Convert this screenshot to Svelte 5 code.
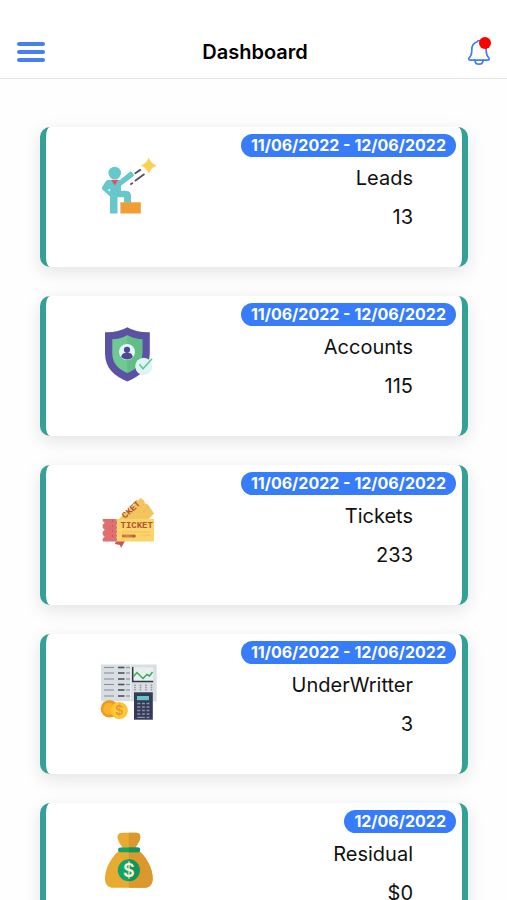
<script>
  const cards = [
    { id: 'leads', title: 'Leads', value: '13', period: '11/06/2022 - 12/06/2022', box: '11 8 56 56' },
    { id: 'accounts', title: 'Accounts', value: '115', period: '11/06/2022 - 12/06/2022', box: '11 12 56 56' },
    { id: 'tickets', title: 'Tickets', value: '233', period: '11/06/2022 - 12/06/2022', box: '11 11 56 56' },
    { id: 'underwriter', title: 'UnderWritter', value: '3', period: '11/06/2022 - 12/06/2022', box: '11 10 56 56' },
    { id: 'residual', title: 'Residual', value: '$0', period: '12/06/2022', box: '11 14 56 56' }
  ];
  const rows = [12.5, 18, 24, 29.5, 35, 41];
  const keys = [48.5, 52, 55.5, 59];
</script>

<div class="screen">
  <header>
    <button class="menu" aria-label="Open menu">
      <span></span><span></span><span></span>
    </button>
    <h1>Dashboard</h1>
    <button class="bell" aria-label="Notifications">
      <svg viewBox="0 0 28 30" width="28" height="30" fill="none" stroke="#3f7df0" stroke-width="1.7" stroke-linejoin="round" stroke-linecap="round">
        <path d="M14 3.500c-.9 0-1.500.4-1.700 1.200C8.600 5.700 6.800 8.600 6.800 12.700c0 5-1 6.600-2.500 8-.9.9-.5 2.400.7 2.400h18c1.200 0 1.600-1.500.7-2.400-1.500-1.400-2.500-3-2.500-8 0-4.100-1.800-7-5.500-8-.2-.8-.8-1.200-1.700-1.200Z" />
        <path d="M10 23.200c0 2.500 1.700 4 4 4s4-1.500 4-4" />
      </svg>
      <i class="dot"></i>
    </button>
  </header>

  <main>
    {#each cards as card (card.id)}
      <article>
        <span class="period">{card.period}</span>
        <div class="content">
          <svg class="picture" viewBox={card.box} aria-hidden="true">
            {#if card.id === 'leads'}
              <circle cx="24.700" cy="23" r="6.300" fill="#66c8cb" />
              <path d="M18 30h12l10-8.300q1-.7 1.800.2l2 2.500q.8 1-.3 1.900L31 35.700v5h5q5 .3 5 5.500v6.500h-7v-5.500h-6.500v16.300h-7.500V46.500l-7.600-7q-1-1-.2-2.500l2.800-4.500Q16 30 18 30Z" fill="#66c8cb" />
              <path d="m19.500 38.500 1.200 1.700-1.200 1.300-1.800-1.200Z" fill="#d8f1f2" />
              <path d="M21.500 29.800h6.600l-1 2-2.200 3.700-2.700-3.700Z" fill="#e25265" />
              <path d="M30.400 52.300h20.400v11.200H30.400Z" fill="#f09d35" />
              <path d="m45.300 23.200 5-3.300M45.500 30.600l8.300-6.200M41 34l1.300-.8" stroke="#555563" stroke-width="1.900" stroke-linecap="round" />
              <path d="M58.700 8.300q2 5.500 7.300 7.300-5.300 2-7.300 7.400-2-5.400-7.300-7.400 5.300-1.800 7.300-7.300Z" fill="#fbd04d" stroke="#fbd04d" stroke-width=".6" />
            {:else if card.id === 'accounts'}
              <path d="M37.300 12.200Q46 17.500 59.800 17.200V38c0 15-9 23-22.500 28.500C24 61 15 53 15 38V17.200q13.500.3 22.300-5Z" fill="#5b52a5" />
              <path d="M37.300 20.300q7 4 15 4V38c0 10.500-6.300 16-15 20-8.800-4-15-9.500-15-20V24.300q8 0 15-4Z" fill="#6fca91" />
              <path d="M37.300 20.300q7 4 15 4V38c0 10.500-6.300 16-15 20Z" fill="#62bd86" />
              <circle cx="37" cy="37" r="8" fill="#e6f6f8" />
              <circle cx="37" cy="34.800" r="3.100" fill="#4e4797" />
              <path d="M31.200 42.200q.4-4 3.800-4.200h4q3.400.2 3.800 4.200-5.300 4.500-11.600 0Z" fill="#4e4797" />
              <circle cx="53.800" cy="51.300" r="8.600" fill="#e1f3f7" />
              <path d="m49.500 49.200 3.500 4.500 9-10" fill="none" stroke="#5dcc91" stroke-width="1.600" />
            {:else if card.id === 'tickets'}
              <path d="M26 56h9l-4 7-1-3-5-1Z" fill="#cf5358" />
              <path d="M12.700 34H27v22.500H12.700v-3l2-1.700-2-2v-3l2-2-2-2v-3l2-2-2-1.800Z" fill="#e06f70" />
              <path d="M22.500 35v2m0 3v2m0 3v2m0 3v2" stroke="#c75b5f" stroke-width="1" />
              <path d="M29 34 50.500 13l3.500 2.500 1 3 3 1 6 9-6 6Z" fill="#f4c55e" />
              <path d="m49 24 5-5m-2 9 6-6" stroke="#e7b34f" stroke-width=".7" />
              <text x="35" y="34" transform="rotate(-43 35 34)" class="stub">CKET</text>
              <path d="M26 34h38v22.500H26l1.600-2-1.600-2 1.600-2-1.600-2 1.600-2-1.600-2 1.600-2-1.600-2 1.600-2Z" fill="#fbd46b" />
              <text x="30.500" y="43" class="ticket">TICKET</text>
              <path d="M32 47h28M50 50h11" stroke="#e4b85b" stroke-width=".6" />
              <path d="M32 51h12" stroke="#c96f42" stroke-width="2.800" />
              <path d="M35 51h5" stroke="#e8a357" stroke-width=".8" />
              <circle cx="44.300" cy="51" r="1.500" fill="#b75a38" />
            {:else if card.id === 'underwriter'}
              <path d="M11 9.500h55.700v36.800H11Z" fill="#d9dee2" />
              <path d="M40.700 9.500v36.800" stroke="#eef1f3" stroke-width="1" />
              {#each rows as y}
                <path d="M14 {y}h10" stroke="#8b929b" stroke-width="1.100" />
                <path d="M28 {y}h6.500" stroke="#4b5263" stroke-width="1.600" />
                <path d="M36 {y}h4" stroke="#9299a2" stroke-width="1.300" />
              {/each}
              <path d="M43.300 12.300h20V26h-20Z" fill="#e9eeee" />
              <path d="M42.700 12v14.500h20.500" fill="none" stroke="#34384d" stroke-width="1.500" />
              <path d="m43.500 21.500 3.500-4 6 6 4-4 2.500 1.500 3-4" fill="none" stroke="#39ad59" stroke-width="1.500" />
              <path d="M45 29.500v6m5.500-6v6m5.500-6v6m5.500-6v6" stroke="#9299a2" stroke-width="1.500" stroke-dasharray="1.500 .7" />
              <circle cx="19.500" cy="53.800" r="8.800" fill="#ec9a22" />
              <circle cx="19" cy="53.800" r="6" fill="#f7b32b" />
              <circle cx="29.300" cy="55.500" r="8.600" fill="#fdc22e" />
              <circle cx="29.300" cy="55.500" r="6.400" fill="#ffcb45" />
              <text x="29.300" y="60.200" class="coin">$</text>
              <path d="M44 37.300h18.800v27.400H44Z" fill="#343a58" />
              <path d="M47 41h12v4.200H47Z" fill="#65c5c5" />
              {#each keys as y}
                <path d="M47.300 {y}h3m1.600 0h3m1.600 0h3" stroke="#8d92a8" stroke-width="1.500" />
              {/each}
              <path d="M47.300 62.300h7.600m1.600 0h3" stroke="#8d92a8" stroke-width="1.200" />
            {:else}
              <path d="M32.500 28c-2-4-5-7-5-11 0-3 2-4.200 5-4.200h12.800c3.500 0 5 1.200 5 4.200 0 4-3 7-5 11C56 35 62.700 48 62.700 58.500c0 6-3 9.300-9 9.300H24c-6 0-9-3.300-9-9.300C15 48 22 35 32.500 28Z" fill="#e9aa31" />
              <path d="M38.800 12.800h6.500c3.500 0 5 1.200 5 4.200 0 4-3 7-5 11C56 35 62.700 48 62.700 58.500c0 6-3 9.300-9 9.300H38.800Z" fill="#db982c" />
              <rect x="28" y="27.500" width="22" height="4.700" rx="2.300" fill="#14a46b" />
              <path d="M38.800 27.500h9a2.300 2.300 0 0 1 0 4.700h-9Z" fill="#0e9560" />
              <circle cx="38.800" cy="50.300" r="11" fill="#14a46b" />
              <path d="M38.800 39.300a11 11 0 0 1 0 22Z" fill="#0e9560" />
              <text x="38.800" y="56.700" class="dollar">$</text>
            {/if}
          </svg>
          <div class="figures">
            <h2>{card.title}</h2>
            <p>{card.value}</p>
          </div>
        </div>
      </article>
    {/each}
  </main>
</div>

<style>
  :global(body) {
    margin: 0;
    background: #fefefe;
  }
  .screen {
    height: 100vh;
    display: flex;
    flex-direction: column;
    color: #111;
    font-family: Inter, "Liberation Sans", sans-serif;
  }
  header {
    flex: none;
    display: grid;
    grid-template-columns: 1fr auto 1fr;
    align-items: center;
    box-sizing: border-box;
    height: 79px;
    padding: 26px 14px 0 17px;
    border-bottom: 1px solid #e6e6e6;
    background: #fff;
  }
  h1, h2, p {
    margin: 0;
    font-size: 20px;
    line-height: 24px;
    font-weight: 400;
  }
  h1 {
    font-weight: 600;
    color: #000;
  }
  button {
    padding: 0;
    border: 0;
    background: none;
    cursor: pointer;
  }
  .menu {
    display: flex;
    flex-direction: column;
    gap: 4px;
    width: 28px;
  }
  .menu span {
    height: 4px;
    border-radius: 2px;
    background: #4480ee;
  }
  .bell {
    position: relative;
    justify-self: end;
    width: 28px;
    height: 30px;
  }
  .bell svg {
    display: block;
  }
  .dot {
    position: absolute;
    top: 0;
    right: 2px;
    width: 12px;
    height: 12px;
    border-radius: 50%;
    background: #fe0000;
  }
  main {
    flex: 1;
    min-height: 0;
    overflow-y: auto;
    scrollbar-width: none;
    display: flex;
    flex-direction: column;
    gap: 29px;
    padding: 48px 39px 48px 40px;
  }
  article {
    flex: none;
    display: flex;
    flex-direction: column;
    box-sizing: border-box;
    min-height: 140px;
    padding: 7px 6px 0;
    border: solid #33a196;
    border-width: 0 6px;
    border-radius: 10px;
    background: #fff;
    box-shadow: 0 5px 18px rgba(0, 0, 0, 0.11);
  }
  .period {
    align-self: flex-end;
    padding: 0 10px;
    border-radius: 12px;
    background: #367cfb;
    color: #fff;
    font-size: 16px;
    line-height: 23px;
    font-weight: 700;
  }
  .content {
    display: flex;
    justify-content: space-between;
    padding: 1px 43px 0 49px;
  }
  .picture {
    width: 56px;
    height: 56px;
    overflow: visible;
  }
  .figures {
    display: flex;
    flex-direction: column;
    gap: 15px;
    padding-top: 8px;
    text-align: right;
  }
  .ticket, .stub {
    font-family: "Liberation Mono", monospace;
    font-size: 9px;
    font-weight: 700;
    fill: #b4532f;
  }
  .coin, .dollar {
    font-weight: 600;
    text-anchor: middle;
  }
  .coin {
    font-size: 13px;
    fill: #e99a1d;
  }
  .dollar {
    font-size: 18px;
    fill: #fff4ce;
  }
</style>
